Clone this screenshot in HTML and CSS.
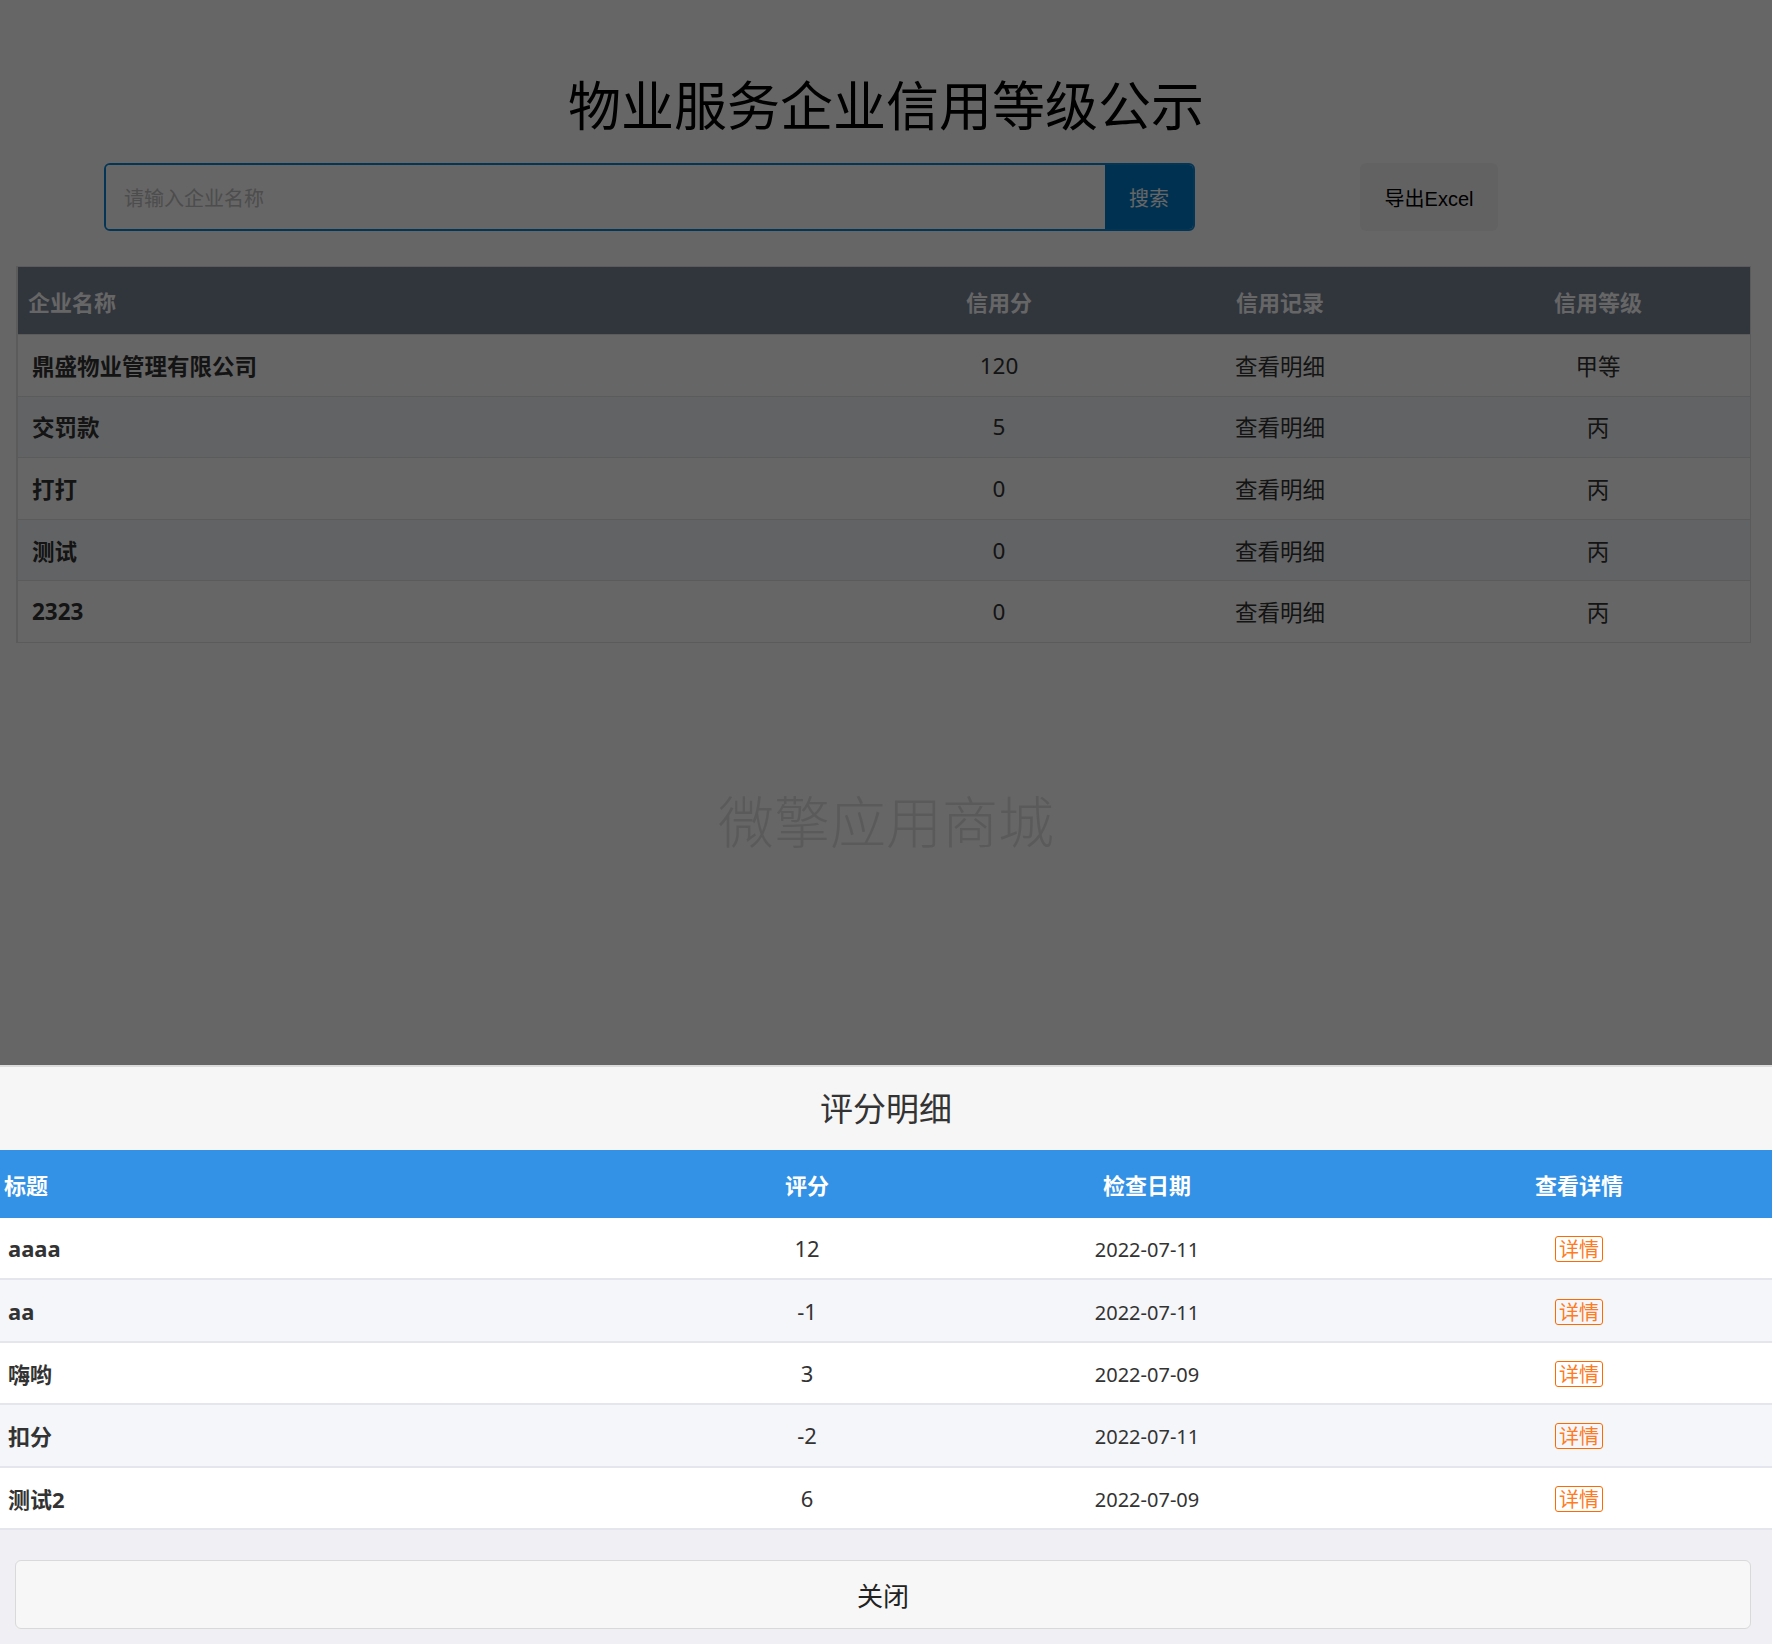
FILE: index.html
```html
<!DOCTYPE html>
<html lang="zh-CN">
<head>
<meta charset="utf-8">
<title>物业服务企业信用等级公示</title>
<link rel="stylesheet" href="styles.css">
</head>
<body>
<div class="page">
  <h1 class="title">物业服务企业信用等级公示</h1>
  <div class="toolbar">
    <form class="search">
      <input class="search-input" type="text" placeholder="请输入企业名称">
      <button class="search-btn" type="button">搜索</button>
    </form>
    <button class="export-btn" type="button">导出Excel</button>
  </div>
  <table class="credit-table">
    <colgroup>
      <col class="cw-name"><col class="cw-score"><col class="cw-record"><col class="cw-level">
    </colgroup>
    <thead>
      <tr><th class="c-left">企业名称</th><th>信用分</th><th>信用记录</th><th>信用等级</th></tr>
    </thead>
    <tbody>
      <tr><td class="c-left">鼎盛物业管理有限公司</td><td>120</td><td>查看明细</td><td>甲等</td></tr>
      <tr><td class="c-left">交罚款</td><td>5</td><td>查看明细</td><td>丙</td></tr>
      <tr><td class="c-left">打打</td><td>0</td><td>查看明细</td><td>丙</td></tr>
      <tr><td class="c-left">测试</td><td>0</td><td>查看明细</td><td>丙</td></tr>
      <tr><td class="c-left">2323</td><td>0</td><td>查看明细</td><td>丙</td></tr>
    </tbody>
  </table>
  <div class="watermark">微擎应用商城</div>
</div>

<div class="mask"></div>

<div class="sheet">
  <div class="sheet-title">评分明细</div>
  <table class="detail-table">
    <colgroup>
      <col class="dw-title"><col class="dw-score"><col class="dw-date"><col class="dw-view">
    </colgroup>
    <thead>
      <tr><th class="d-left">标题</th><th>评分</th><th>检查日期</th><th>查看详情</th></tr>
    </thead>
    <tbody>
      <tr><td class="d-left">aaaa</td><td>12</td><td class="d-date">2022-07-11</td><td><span class="detail-btn">详情</span></td></tr>
      <tr><td class="d-left">aa</td><td>-1</td><td class="d-date">2022-07-11</td><td><span class="detail-btn">详情</span></td></tr>
      <tr><td class="d-left">嗨哟</td><td>3</td><td class="d-date">2022-07-09</td><td><span class="detail-btn">详情</span></td></tr>
      <tr><td class="d-left">扣分</td><td>-2</td><td class="d-date">2022-07-11</td><td><span class="detail-btn">详情</span></td></tr>
      <tr><td class="d-left">测试2</td><td>6</td><td class="d-date">2022-07-09</td><td><span class="detail-btn">详情</span></td></tr>
    </tbody>
  </table>
  <div class="sheet-foot">
    <button class="close-btn" type="button">关闭</button>
  </div>
</div>
</body>
</html>
```

FILE: styles.css
```css
* { box-sizing: border-box; }
html, body { margin: 0; padding: 0; }
body {
  background: #fff;
  font-family: "Noto Sans", "Noto Sans CJK SC", sans-serif;
  color: #333;
  width: 1772px;
  height: 1644px;
  overflow: hidden;
}

.page { padding-top: 77px; }

.title {
  margin: 0;
  font-family: "Noto Sans CJK SC", sans-serif;
  font-size: 53px;
  line-height: 53px;
  font-weight: 400;
  text-align: center;
  color: #000;
}

.toolbar {
  display: flex;
  height: 68px;
  margin: 33px 0 0 104px;
}

.search {
  display: flex;
  width: 1091px;
  height: 68px;
  margin: 0;
  border: 2px solid #0585d6;
  border-radius: 6px;
  overflow: hidden;
}

.search-input {
  flex: 1;
  border: none;
  outline: none;
  padding: 0 0 0 18px;
  font-family: "Noto Sans CJK SC", sans-serif;
  font-size: 20px;
  color: #333;
  background: #fff;
}
.search-input::placeholder { color: #c0c0c0; }

.search-btn {
  width: 88px;
  border: none;
  background: #037cc9;
  color: #fff;
  font-family: "Noto Sans CJK SC", sans-serif;
  font-size: 20px;
  padding: 0;
}

.export-btn {
  width: 138px;
  margin-left: 165px;
  border: none;
  border-radius: 6px;
  background: #f6f6f6;
  color: #000;
  font-family: "Liberation Sans", "Noto Sans CJK SC", sans-serif;
  font-size: 20px;
  padding: 0;
}

.credit-table {
  width: 1735px;
  margin: 35px 0 0 16px;
  border-collapse: separate;
  border-spacing: 0;
  border: 1px solid #e3e3e3;
  border-left-width: 2px;
}
.cw-name { width: 866px; }
.cw-score { width: 230px; }
.cw-record { width: 332px; }
.cw-level { width: 304px; }

.credit-table th {
  height: 67px;
  padding: 0;
  background: #7a8497;
  color: #fff;
  font-family: "Noto Sans CJK SC", sans-serif;
  font-size: 22px;
  font-weight: 700;
  text-align: center;
}
.credit-table th.c-left { text-align: left; padding-left: 10px; }

.credit-table td {
  padding: 0;
  height: 61.6px;
  border-top: 1px solid #e4e4e4;
  font-size: 22.5px;
  text-align: center;
  color: #333;
  vertical-align: middle;
}
.credit-table td.c-left {
  text-align: left;
  padding-left: 14px;
  font-weight: 700;
}
.credit-table tbody tr:nth-child(even) td { background: #f5f7fb; }

.watermark {
  margin-top: 148px;
  font-family: "Noto Sans CJK SC", sans-serif;
  font-size: 56px;
  line-height: 56px;
  font-weight: 300;
  color: #e2e2e2;
  text-align: center;
}

.mask {
  position: fixed;
  top: 0; left: 0; right: 0; bottom: 0;
  background: rgba(0, 0, 0, 0.6);
}

.sheet {
  position: fixed;
  left: 0; right: 0; bottom: 0;
  background: #efeff4;
  border-top: 2px solid #dcdcdc;
}

.sheet-title {
  height: 83px;
  line-height: 80px;
  background: #f6f6f6;
  font-family: "Noto Sans CJK SC", sans-serif;
  font-size: 33px;
  color: #333;
  text-align: center;
}

.detail-table {
  width: 1772px;
  border-collapse: separate;
  border-spacing: 0;
}
.dw-title { width: 706px; }
.dw-score { width: 202px; }
.dw-date { width: 478px; }
.dw-view { width: 386px; }

.detail-table th {
  height: 68px;
  padding: 0;
  background: #3391e6;
  color: #fff;
  font-family: "Noto Sans CJK SC", sans-serif;
  font-size: 22px;
  font-weight: 700;
  text-align: center;
}
.detail-table th.d-left { text-align: left; padding-left: 4px; }

.detail-table td {
  padding: 0;
  height: 62.4px;
  border-bottom: 2px solid #e4e5ed;
  background: #fff;
  font-size: 22px;
  text-align: center;
  color: #333;
  vertical-align: middle;
}
.detail-table tbody tr:nth-child(even) td { background: #f5f6fa; }
.detail-table td.d-left {
  text-align: left;
  padding-left: 8px;
  font-weight: 700;
}
.detail-table td.d-date { font-size: 20px; padding-top: 3px; }

.detail-btn {
  display: inline-block;
  padding: 0 3px;
  border: 1px solid #ff6a00;
  border-radius: 3px;
  font-family: "Noto Sans CJK SC", sans-serif;
  font-size: 20px;
  line-height: 24px;
  color: #ff7a22;
}

.sheet-foot {
  padding: 30px 21px 15px 15px;
}
.close-btn {
  display: block;
  width: 100%;
  height: 69px;
  padding: 0;
  border: 1px solid #d9d9d9;
  border-radius: 6px;
  background: #f7f7f7;
  font-family: "Noto Sans CJK SC", sans-serif;
  font-size: 26px;
  color: #222;
}
```
